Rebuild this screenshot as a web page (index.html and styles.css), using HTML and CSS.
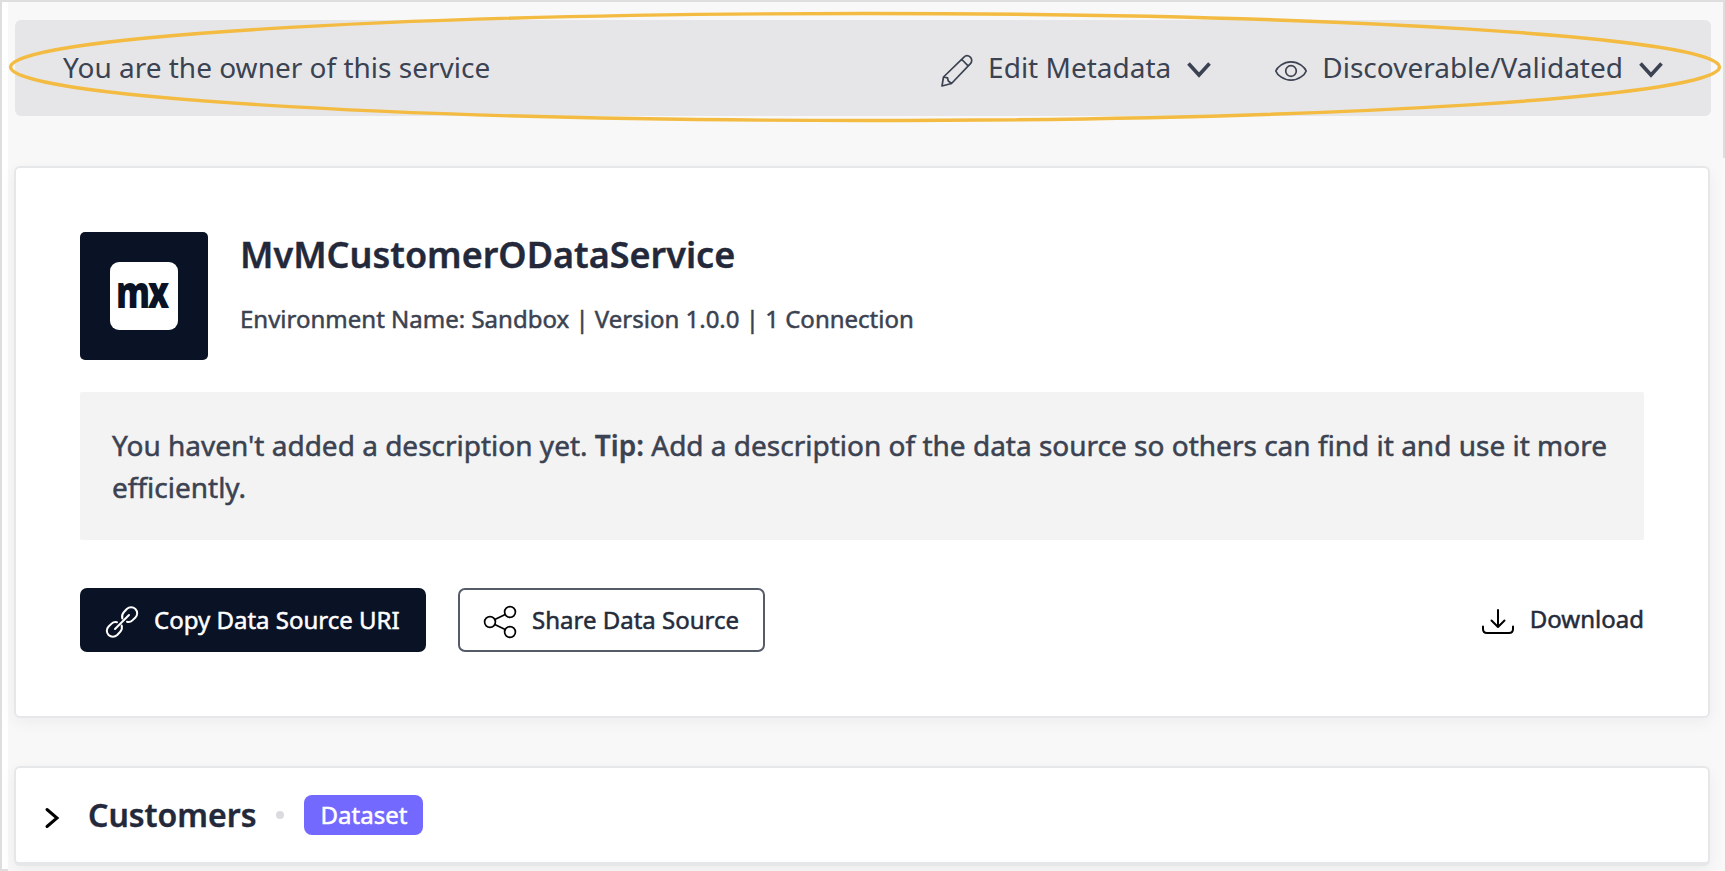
FILE: index.html
```html
<!DOCTYPE html>
<html lang="en">
<head>
<meta charset="utf-8">
<title>MvMCustomerODataService</title>
<link rel="stylesheet" href="styles.css">
</head>
<body>
<div class="frame">
  <div class="gutter"></div>
  <main class="page">
    <header class="owner-bar">
      <span class="owner-text">You are the owner of this service</span>
      <div class="owner-action edit">
        <svg class="icon" viewBox="0 0 32 32"><path d="M1 31 2.500 22 22.700 2.300c2-2 4.700-1.900 6.600-.1s1.900 4.600-.1 6.600L10.500 28.500zM2.500 22l4 .8.700 3 3.300 2.700M20.800 4.500l6.300 6.300"/></svg>
        <span class="edit-text">Edit Metadata</span>
        <svg class="chevron" viewBox="0 0 24 16"><path d="M1.500 1.500 12 13 22.500 1.500"/></svg>
      </div>
      <div class="owner-action visibility">
        <svg class="icon" viewBox="0 0 32 32"><path d="M.8 16C2 12.500 8.200 6.800 16 6.800S30 12.500 31.200 16C30 19.500 23.800 25.200 16 25.200S2 19.500.8 16z"/><circle cx="16" cy="16" r="5.300"/></svg>
        <span class="visibility-text">Discoverable/Validated</span>
        <svg class="chevron" viewBox="0 0 24 16"><path d="M1.500 1.500 12 13 22.500 1.500"/></svg>
      </div>
      <svg class="highlight" viewBox="0 0 1714 110"><ellipse cx="856" cy="55" rx="854.500" ry="53.500"/></svg>
    </header>

    <section class="card service">
      <div class="service-head">
        <div class="logo">
          <svg viewBox="0 0 68 68"><rect width="68" height="68" rx="9"/><text transform="translate(6 46) scale(.775 1)">mx</text></svg>
        </div>
        <div class="service-info">
          <h1>MvMCustomerODataService</h1>
          <p class="meta">Environment Name: Sandbox | Version 1.0.0 | 1 Connection</p>
        </div>
      </div>
      <p class="description">You haven't added a description yet. <b>Tip:</b> Add a description of the data source so others can find it and use it more efficiently.</p>
      <div class="actions">
        <button class="btn primary">
          <svg class="icon" viewBox="0 0 32 32"><path d="M16.300 12.500Q15.300 8.800 18 6l2.800-3a6.300 6.300 0 0 1 8.600 0c2.400 2.400 2.300 6.100 0 8.500l-3 2.900q-2.300 2.200-5.400 1.400M15.700 19.500Q16.700 23.200 14 26l-2.800 3a6.300 6.300 0 0 1-8.600 0c-2.400-2.400-2.300-6.100 0-8.500l3-2.900Q7.900 15.400 11 16.200M9 23 23 9"/></svg>
          <span class="copy-text">Copy Data Source URI</span>
        </button>
        <button class="btn outline">
          <svg class="icon" viewBox="0 0 32 32"><circle cx="6" cy="16" r="5.400"/><circle cx="26" cy="6" r="5.400"/><circle cx="26" cy="26" r="5.400"/><path d="m10.800 13.600 10.400-5.200M10.800 18.400l10.400 5.200"/></svg>
          <span class="share-text">Share Data Source</span>
        </button>
        <a class="download">
          <svg class="icon" viewBox="0 0 32 32"><path d="M16 4v16.500M9.500 14.500 16 21l6.500-6.500M1 20.500V23q0 4 4 4h22q4 0 4-4v-2.500"/></svg>
          <span>Download</span>
        </a>
      </div>
    </section>

    <section class="card dataset">
      <svg class="expand" viewBox="0 0 14 20"><path d="m2 1.500 10 8.500-10 8.500"/></svg>
      <h2>Customers</h2>
      <i class="dot"></i>
      <span class="badge">Dataset</span>
    </section>
  </main>
  <div class="right-edge"></div>
</div>
</body>
</html>
```
FILE: styles.css
```css
* { box-sizing: border-box; }
body {
  margin: 0;
  height: 871px;
  overflow: hidden;
  background: #f8f8f8;
  color: #3b4251;
  font-family: "Noto Sans", sans-serif;
  font-size: 24px;
  font-weight: 400;
}
h1, h2, p { margin: 0; }
span, h1, h2 { white-space: nowrap; }
svg { display: block; flex: none; overflow: visible; }
.frame { display: flex; height: 871px; border-top: 2px solid #dedede; }
.gutter { width: 8px; background: #fff; border-left: 2px solid #dedede; border-bottom: 2px solid #dedede; }
.page { width: 1715px; padding: 18px 12px 0 6px; }
.right-edge { width: 2px; height: 156px; background: #dedede; }

.owner-bar {
  position: relative;
  display: flex;
  align-items: center;
  width: 1696px;
  height: 96px;
  margin-left: 1px;
  padding: 0 48px;
  border-radius: 6px;
  background: #e6e6e8;
  font-size: 28px;
}
.owner-text { line-height: 40px; padding-bottom: 3px; }
.owner-action { display: flex; align-items: center; }
.owner-action span { line-height: 40px; padding-bottom: 3px; margin-left: 15px; }
.icon { width: 32px; height: 32px; fill: none; stroke: currentColor; stroke-width: 1.7; stroke-linejoin: round; stroke-linecap: round; }
.owner-action .icon { margin-top: 6px; }
.edit { margin-left: auto; }
.visibility { margin-left: 63px; }
.chevron { width: 24px; height: 16px; margin: 4px 0 0 17px; fill: none; stroke: #3b4251; stroke-width: 3.6; }
.edit .chevron { margin-left: 16px; margin-right: 1px; }
.visibility .chevron { margin-left: 16px; }
.highlight { position: absolute; left: -6px; top: -8px; width: 1714px; height: 110px; fill: none; stroke: #f3bb41; stroke-width: 3.4; }

.card {
  width: 1696px;
  border: 2px solid #e6e7e9;
  border-radius: 6px;
  background: #fff;
  box-shadow: 0 4px 16px rgba(0, 0, 0, .05);
}
.service { height: 552px; margin-top: 50px; padding: 64px; }
.service-head { display: flex; gap: 32px; height: 128px; }
.logo { display: grid; place-items: center; width: 128px; height: 128px; border-radius: 5px; background: #0a1325; }
.logo svg { width: 68px; height: 68px; fill: #fff; }
.logo text { fill: #0a1325; font: 900 44px "Noto Sans", sans-serif; letter-spacing: -3px; }
h1 { color: #23293a; font-size: 36px; line-height: 46px; font-weight: 600; -webkit-text-stroke: .4px; }
.meta, .description, .btn, .download, .badge { -webkit-text-stroke: .5px; }
.meta { margin-top: 24px; line-height: 34px; white-space: nowrap; }
.description { height: 148px; margin-top: 32px; padding: 32px; border-radius: 2px; background: #f3f3f3; font-size: 28px; line-height: 42px; }
.description b { font-weight: 600; -webkit-text-stroke: .3px; }
.actions { display: flex; gap: 32px; height: 64px; margin-top: 48px; }
.btn { display: flex; align-items: center; gap: 16px; height: 64px; padding: 0 24px; border: 2px solid #0a1325; border-radius: 7px; font: inherit; }
.btn span { padding-bottom: 1px; }
.btn .icon { margin-top: 4px; }
.primary { width: 346px; color: #fff; background: #0a1325; }
.primary .icon { stroke-width: 2; }
.outline { width: 307px; border-color: #565b69; color: #252b3b; background: #fff; }
.outline .icon, .download .icon { color: #000; }
.download { display: flex; align-items: center; gap: 16px; margin-left: auto; color: #252b3b; }
.download span { padding-bottom: 4px; }
.download .icon { margin-top: 4px; stroke-width: 2; }

.dataset { display: flex; align-items: center; height: 100px; margin-top: 48px; padding: 0 29px; border-bottom-width: 4px; }
.expand { width: 14px; height: 20px; margin-top: 6px; fill: none; stroke: #000; stroke-width: 3; stroke-linecap: round; }
h2 { margin-left: 29px; color: #23293a; font-size: 32px; line-height: 44px; font-weight: 600; -webkit-text-stroke: .4px; }
.dot { width: 8px; height: 8px; margin-left: 20px; border-radius: 50%; background: #d9dbde; }
.badge { width: 119px; height: 40px; margin-left: 20px; border-radius: 8px; background: #7469ff; color: #fff; line-height: 39px; text-align: center; }
```
